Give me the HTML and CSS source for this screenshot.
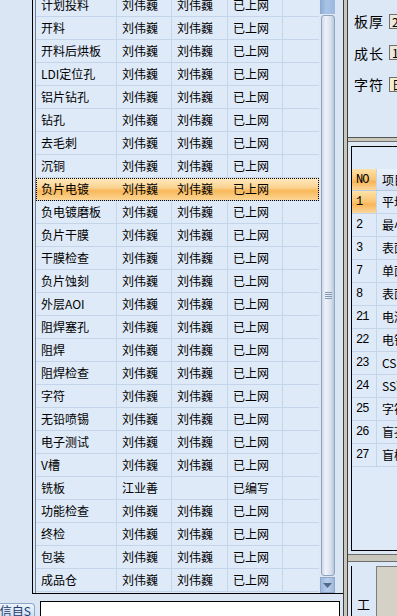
FILE: index.html
```html
<!DOCTYPE html>
<html lang="zh-CN">
<head>
    <meta charset="UTF-8">
    <title>工序</title>
    <link rel="stylesheet" href="styles.css">
</head>
<body>
    <div class="app">
        <div class="main">
            <div class="upper">
                <div class="strip"></div>
                <div class="grid">
                    <div class="sheet">
                        <div class="rows">
                            <div class="row"><div class="cell c1">计划投料</div><div class="cell c2">刘伟巍</div><div class="cell c3">刘伟巍</div><div class="cell c4">已上网</div><div class="cell c5"></div></div>
                            <div class="row"><div class="cell c1">开料</div><div class="cell c2">刘伟巍</div><div class="cell c3">刘伟巍</div><div class="cell c4">已上网</div><div class="cell c5"></div></div>
                            <div class="row"><div class="cell c1">开料后烘板</div><div class="cell c2">刘伟巍</div><div class="cell c3">刘伟巍</div><div class="cell c4">已上网</div><div class="cell c5"></div></div>
                            <div class="row"><div class="cell c1">LDI定位孔</div><div class="cell c2">刘伟巍</div><div class="cell c3">刘伟巍</div><div class="cell c4">已上网</div><div class="cell c5"></div></div>
                            <div class="row"><div class="cell c1">铝片钻孔</div><div class="cell c2">刘伟巍</div><div class="cell c3">刘伟巍</div><div class="cell c4">已上网</div><div class="cell c5"></div></div>
                            <div class="row"><div class="cell c1">钻孔</div><div class="cell c2">刘伟巍</div><div class="cell c3">刘伟巍</div><div class="cell c4">已上网</div><div class="cell c5"></div></div>
                            <div class="row"><div class="cell c1">去毛刺</div><div class="cell c2">刘伟巍</div><div class="cell c3">刘伟巍</div><div class="cell c4">已上网</div><div class="cell c5"></div></div>
                            <div class="row"><div class="cell c1">沉铜</div><div class="cell c2">刘伟巍</div><div class="cell c3">刘伟巍</div><div class="cell c4">已上网</div><div class="cell c5"></div></div>
                            <div class="row selected"><div class="cell c1">负片电镀</div><div class="cell c2">刘伟巍</div><div class="cell c3">刘伟巍</div><div class="cell c4">已上网</div><div class="cell c5"></div></div>
                            <div class="row"><div class="cell c1">负电镀磨板</div><div class="cell c2">刘伟巍</div><div class="cell c3">刘伟巍</div><div class="cell c4">已上网</div><div class="cell c5"></div></div>
                            <div class="row"><div class="cell c1">负片干膜</div><div class="cell c2">刘伟巍</div><div class="cell c3">刘伟巍</div><div class="cell c4">已上网</div><div class="cell c5"></div></div>
                            <div class="row"><div class="cell c1">干膜检查</div><div class="cell c2">刘伟巍</div><div class="cell c3">刘伟巍</div><div class="cell c4">已上网</div><div class="cell c5"></div></div>
                            <div class="row"><div class="cell c1">负片蚀刻</div><div class="cell c2">刘伟巍</div><div class="cell c3">刘伟巍</div><div class="cell c4">已上网</div><div class="cell c5"></div></div>
                            <div class="row"><div class="cell c1">外层AOI</div><div class="cell c2">刘伟巍</div><div class="cell c3">刘伟巍</div><div class="cell c4">已上网</div><div class="cell c5"></div></div>
                            <div class="row"><div class="cell c1">阻焊塞孔</div><div class="cell c2">刘伟巍</div><div class="cell c3">刘伟巍</div><div class="cell c4">已上网</div><div class="cell c5"></div></div>
                            <div class="row"><div class="cell c1">阻焊</div><div class="cell c2">刘伟巍</div><div class="cell c3">刘伟巍</div><div class="cell c4">已上网</div><div class="cell c5"></div></div>
                            <div class="row"><div class="cell c1">阻焊检查</div><div class="cell c2">刘伟巍</div><div class="cell c3">刘伟巍</div><div class="cell c4">已上网</div><div class="cell c5"></div></div>
                            <div class="row"><div class="cell c1">字符</div><div class="cell c2">刘伟巍</div><div class="cell c3">刘伟巍</div><div class="cell c4">已上网</div><div class="cell c5"></div></div>
                            <div class="row"><div class="cell c1">无铅喷锡</div><div class="cell c2">刘伟巍</div><div class="cell c3">刘伟巍</div><div class="cell c4">已上网</div><div class="cell c5"></div></div>
                            <div class="row"><div class="cell c1">电子测试</div><div class="cell c2">刘伟巍</div><div class="cell c3">刘伟巍</div><div class="cell c4">已上网</div><div class="cell c5"></div></div>
                            <div class="row"><div class="cell c1">V槽</div><div class="cell c2">刘伟巍</div><div class="cell c3">刘伟巍</div><div class="cell c4">已上网</div><div class="cell c5"></div></div>
                            <div class="row"><div class="cell c1">铣板</div><div class="cell c2">江业善</div><div class="cell c3"></div><div class="cell c4">已编写</div><div class="cell c5"></div></div>
                            <div class="row"><div class="cell c1">功能检查</div><div class="cell c2">刘伟巍</div><div class="cell c3">刘伟巍</div><div class="cell c4">已上网</div><div class="cell c5"></div></div>
                            <div class="row"><div class="cell c1">终检</div><div class="cell c2">刘伟巍</div><div class="cell c3">刘伟巍</div><div class="cell c4">已上网</div><div class="cell c5"></div></div>
                            <div class="row"><div class="cell c1">包装</div><div class="cell c2">刘伟巍</div><div class="cell c3">刘伟巍</div><div class="cell c4">已上网</div><div class="cell c5"></div></div>
                            <div class="row"><div class="cell c1">成品仓</div><div class="cell c2">刘伟巍</div><div class="cell c3">刘伟巍</div><div class="cell c4">已上网</div><div class="cell c5"></div></div>
                        </div>
                        <div class="scrollbar">
                            <div class="sb-top"></div>
                            <div class="thumb"><div class="grip"></div></div>
                            <div class="sb-down">
                                <svg width="9" height="5" viewBox="0 0 9 5"><path d="M0 0h9L4.5 5z" fill="#52688c"/></svg>
                            </div>
                        </div>
                    </div>
                </div>
            </div>
            <div class="bottom-bar">
                <div class="tab"><span>信自S</span></div>
                <div class="cmd"></div>
            </div>
        </div>

        <div class="splitter"></div>

        <div class="side">
            <div class="panel params">
                <div class="param"><span class="label">板厚</span><span class="box">2</span></div>
                <div class="param"><span class="label">成长</span><span class="box">1</span></div>
                <div class="param"><span class="label">字符</span><span class="box yellow">日</span></div>
            </div>
            <div class="hsplit"></div>
            <div class="panel items">
                <div class="frame">
                    <div class="frame-gap"></div>
                    <div class="irow head"><div class="no">NO</div><div class="name">项目</div></div>
                    <div class="irow"><div class="no current">1</div><div class="name">平均铜厚</div></div>
                    <div class="irow"><div class="no">2</div><div class="name">最小铜厚</div></div>
                    <div class="irow"><div class="no">3</div><div class="name">表面处理</div></div>
                    <div class="irow"><div class="no">7</div><div class="name">单面厚度</div></div>
                    <div class="irow"><div class="no">8</div><div class="name">表面铜厚</div></div>
                    <div class="irow"><div class="no">21</div><div class="name">电测</div></div>
                    <div class="irow"><div class="no">22</div><div class="name">电镀</div></div>
                    <div class="irow"><div class="no">23</div><div class="name">CS面</div></div>
                    <div class="irow"><div class="no">24</div><div class="name">SS面</div></div>
                    <div class="irow"><div class="no">25</div><div class="name">字符</div></div>
                    <div class="irow"><div class="no">26</div><div class="name">盲孔</div></div>
                    <div class="irow"><div class="no">27</div><div class="name">盲槽</div></div>
                </div>
            </div>
            <div class="hsplit low"></div>
            <div class="panel process">
                <div class="vlabel">工</div>
                <div class="graybox"></div>
            </div>
        </div>
    </div>
</body>
</html>
```

FILE: styles.css
```css
/* Basic Reset */
* {
    box-sizing: border-box;
    margin: 0;
    padding: 0;
}

body {
    width: 397px;
    height: 616px;
    overflow: hidden;
    background: #dae6f4;
    color: #000;
    font-family: "Noto Sans CJK SC", "DejaVu Sans", sans-serif;
    font-size: 12px;
}

.app {
    display: flex;
    height: 616px;
}

.main {
    width: 343px;
    display: flex;
    flex-direction: column;
}

.upper {
    display: flex;
    height: 594px;
}

.strip {
    width: 32px;
}

.grid {
    width: 311px;
    display: flex;
    border-left: 1px solid #000;
    border-bottom: 1px solid #000;
    padding-left: 2px;
    padding-right: 7px;
}

.sheet {
    flex: 1;
    display: flex;
    border-left: 1px solid #6f819c;
    overflow: hidden;
    background: #dfeaf8;
}

.rows {
    width: 283px;
    margin-top: -6px;
}

.row {
    display: flex;
    height: 23px;
    border-bottom: 1px solid #c4d4e9;
}

.cell {
    height: 22px;
    line-height: 22px;
    padding-left: 5px;
    white-space: nowrap;
    overflow: hidden;
    border-right: 1px solid #c4d4e9;
}

.c1 { width: 81px; }
.c2 { width: 55px; }
.c3 { width: 56px; }
.c4 { width: 55px; }
.c5 { flex: 1; border-right: none; }

.row.selected {
    background: linear-gradient(#feeac0, #fbd28f 45%, #f8b858 58%, #fcd596);
    outline: 1px dotted #000;
    outline-offset: -1px;
}

.row.selected .cell {
    border-right-color: transparent;
}

/* scrollbar */
.scrollbar {
    width: 17px;
    display: flex;
    flex-direction: column;
    background: #dfe7f2;
}

.sb-top {
    height: 14px;
    margin: 0 1px;
    background: linear-gradient(to right, #8aa8d2, #a9c3e6 40%, #9bb8df);
}

.thumb {
    flex: 1;
    margin: 1px 1px 1px 2px;
    border: 1px solid #8fa3c2;
    border-radius: 3px;
    background: linear-gradient(to right, #cdd8e8, #eef2f8 30%, #dbe3ef 70%, #b9c8dd);
    display: flex;
    align-items: center;
    justify-content: center;
}

.grip {
    width: 7px;
    height: 7px;
    background: repeating-linear-gradient(#8798b2 0 1px, transparent 1px 2px);
}

.sb-down {
    height: 16px;
    margin: 0 1px;
    border: 1px solid #8ea6c8;
    background: linear-gradient(to right, #9db8df, #b8cdea 50%, #9fb9dd);
    display: flex;
    align-items: center;
    justify-content: center;
}

/* bottom bar */
.bottom-bar {
    flex: 1;
    display: flex;
    gap: 5px;
    overflow: hidden;
}

.tab {
    width: 35px;
    height: 16px;
    margin-top: 9px;
    border: 1px solid #8ea7c9;
    border-left: none;
    border-radius: 0 4px 0 0;
    background: linear-gradient(#eef4fc, #c9dbf1);
    color: #1f3c6b;
    font-size: 12px;
    line-height: 13px;
    overflow: hidden;
    display: flex;
    justify-content: flex-end;
    padding-right: 3px;
}

.tab span {
    white-space: nowrap;
}

.cmd {
    width: 300px;
    height: 20px;
    margin-top: 7px;
    border: 1px solid #000;
    background: #fff;
}

/* right side */
.splitter {
    width: 5px;
    border-left: 1px solid #3d3d3d;
    border-right: 1px solid #3d3d3d;
    background: #c9c6bc;
}

.side {
    flex: 1;
    display: flex;
    flex-direction: column;
    min-width: 0;
    overflow: hidden;
}

.panel {
    background: #dde8f6;
    overflow: hidden;
}

.params {
    height: 138px;
    padding: 13px 0 0 6px;
    border-bottom: 1px solid #555;
}

.param {
    display: flex;
    align-items: center;
    height: 16px;
    margin-bottom: 15.5px;
}

.label {
    width: 35px;
    flex-shrink: 0;
    font-size: 14px;
    letter-spacing: 1px;
    white-space: nowrap;
}

.box {
    width: 30px;
    height: 15px;
    border: 1px solid #6f6f6f;
    border-right: none;
    background: #ebe8dc;
    font-size: 12px;
    line-height: 13px;
    padding-left: 2px;
    flex-shrink: 0;
}

.box.yellow {
    background: #f6efcf;
}

.hsplit {
    height: 4px;
    background: #c9c6bc;
    border-bottom: 1px solid #6d6d6d;
}

.hsplit.low {
    height: 8px;
    border-top: 1px solid #6d6d6d;
}

.items {
    height: 412px;
    padding: 4px 0 3px 3px;
}

.frame {
    height: 100%;
    border: 1px solid #000;
    border-right: none;
    background: #dfeaf8;
}

.frame-gap {
    height: 22px;
}

.irow {
    display: flex;
    height: 23px;
    border-bottom: 1px solid #c4d4e9;
    line-height: 22px;
}

.irow.head {
    height: 22px;
    border-bottom: 1px solid #b9c9de;
    background: linear-gradient(#eaf1fa, #d3e0f1);
}

.no {
    width: 25px;
    flex-shrink: 0;
    padding-left: 4px;
    border-right: 1px solid #c4d4e9;
    font-family: "Liberation Mono", monospace;
    font-size: 12px;
    letter-spacing: -1px;
}

.name {
    flex: 1;
    padding-left: 5px;
    white-space: nowrap;
    overflow: hidden;
}

.head .no,
.no.current {
    background: linear-gradient(#fde2aa, #fbc470 50%, #f8b458 60%, #fcd79c);
}

.process {
    flex: 1;
    display: flex;
    padding: 4px 0 0 3px;
}

.vlabel {
    width: 25px;
    flex-shrink: 0;
    padding: 31px 0 0 5px;
    border-left: 1px solid #000;
    font-size: 13px;
    line-height: 14px;
}

.graybox {
    flex: 1;
    border: 1px solid #7d7d7d;
    border-right: none;
    border-bottom: none;
    background: #d5d1c6;
}
```
